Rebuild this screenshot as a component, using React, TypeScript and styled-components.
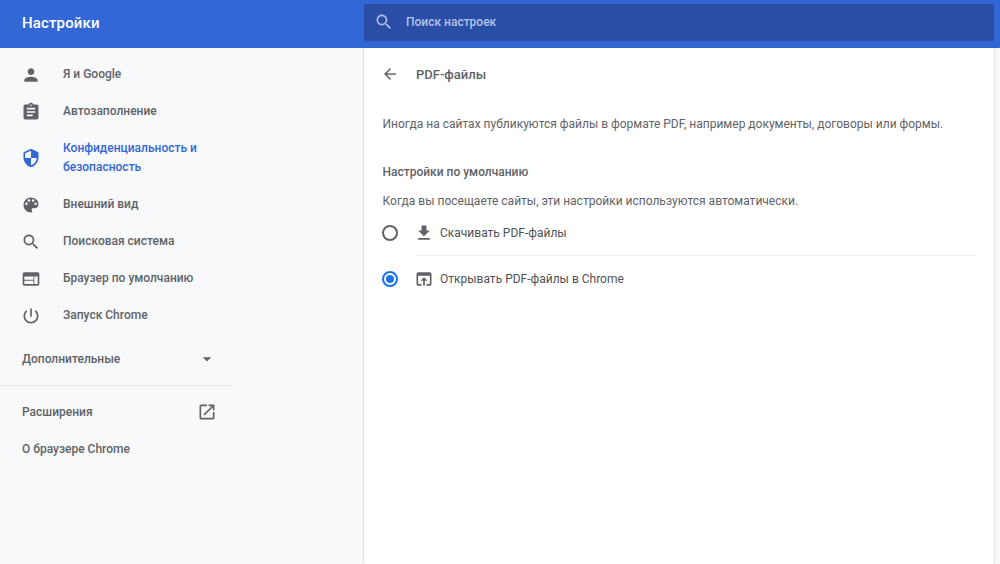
import styled, { createGlobalStyle } from "styled-components";

const GlobalStyle = createGlobalStyle`
  html, body {
    margin: 0;
    height: 100%;
    overflow: hidden;
    background: #f8f9fa;
    font-family: Roboto, "Liberation Sans", sans-serif;
  }
  #root {
    height: 100%;
  }
`;

const icons = {
  person:
    "M12 12c2.21 0 4-1.79 4-4s-1.79-4-4-4-4 1.79-4 4 1.79 4 4 4zm0 2c-2.67 0-8 1.34-8 4v2h16v-2c0-2.66-5.33-4-8-4z",
  assignment:
    "M19 3h-4.18C14.4 1.84 13.3 1 12 1c-1.3 0-2.4.84-2.82 2H5c-1.1 0-2 .9-2 2v14c0 1.1.9 2 2 2h14c1.1 0 2-.9 2-2V5c0-1.1-.9-2-2-2zm-7 0c.55 0 1 .45 1 1s-.45 1-1 1-1-.45-1-1 .45-1 1-1zm2 14H7v-2h7v2zm3-4H7v-2h10v2zm0-4H7V7h10v2z",
  shield:
    "M12 1L3 5v6c0 5.55 3.84 10.74 9 12 5.16-1.26 9-6.45 9-12V5l-9-4zm0 10.99h7c-.53 4.12-3.28 7.79-7 8.94V12H5V6.3l7-3.11v8.8z",
  palette:
    "M12 3c-4.97 0-9 4.03-9 9s4.03 9 9 9c.83 0 1.5-.67 1.5-1.5 0-.39-.15-.74-.39-1.01-.23-.26-.38-.61-.38-.99 0-.83.67-1.5 1.5-1.5H16c2.76 0 5-2.24 5-5 0-4.42-4.03-8-9-8zm-5.5 9c-.83 0-1.5-.67-1.5-1.5S5.67 9 6.5 9 8 9.67 8 10.5 7.33 12 6.5 12zm3-4C8.67 8 8 7.33 8 6.5S8.67 5 9.5 5s1.5.67 1.5 1.5S10.33 8 9.5 8zm5 0c-.83 0-1.5-.67-1.5-1.5S13.67 5 14.5 5s1.5.67 1.5 1.5S15.33 8 14.5 8zm3 4c-.83 0-1.5-.67-1.5-1.5S16.67 9 17.5 9s1.5.67 1.5 1.5-.67 1.5-1.5 1.5z",
  search:
    "M15.5 14h-.79l-.28-.27C15.41 12.59 16 11.11 16 9.5 16 5.91 13.09 3 9.5 3S3 5.91 3 9.5 5.91 16 9.5 16c1.61 0 3.09-.59 4.23-1.57l.27.28v.79l5 4.99L20.49 19l-4.99-5zm-6 0C7.01 14 5 11.99 5 9.5S7.01 5 9.5 5 14 7.01 14 9.5 11.99 14 9.5 14z",
  browser:
    "M20 4H4c-1.1 0-2 .9-2 2v12c0 1.1.9 2 2 2h16c1.1 0 2-.9 2-2V6c0-1.1-.9-2-2-2zm-5 14H4v-4h11v4zm0-5H4V9h11v4zm5 5h-4V9h4v9z",
  power:
    "M13 3h-2v10h2V3zm4.83 2.17l-1.42 1.42C17.99 7.86 19 9.81 19 12c0 3.87-3.13 7-7 7s-7-3.13-7-7c0-2.19 1.01-4.14 2.58-5.42L6.17 5.17C4.23 6.82 3 9.26 3 12c0 4.97 4.03 9 9 9s9-4.03 9-9c0-2.74-1.23-5.18-3.17-6.83z",
  dropdown: "M7 10l5 5 5-5z",
  launch:
    "M19 19H5V5h7V3H5c-1.11 0-2 .9-2 2v14c0 1.1.89 2 2 2h14c1.1 0 2-.9 2-2v-7h-2v7zM14 3v2h3.59l-9.83 9.83 1.41 1.41L19 6.41V10h2V3h-7z",
  back: "M20 11H7.83l5.59-5.59L12 4l-8 8 8 8 1.41-1.41L7.83 13H20v-2z",
  download: "M19 9h-4V3H9v6H5l7 7 7-7zM5 18v2h14v-2H5z",
  open:
    "M19 4H5c-1.11 0-2 .9-2 2v12c0 1.1.89 2 2 2h4v-2H5V8h14v10h-4v2h4c1.1 0 2-.9 2-2V6c0-1.1-.89-2-2-2zm-7 6l-4 4h3v6h2v-6h3l-4-4z",
};

type IconName = keyof typeof icons;

const Svg = styled.svg<{ $color?: string; $size?: number }>`
  display: block;
  flex: none;
  width: ${(p) => p.$size ?? 20}px;
  height: ${(p) => p.$size ?? 20}px;
  fill: ${(p) => p.$color ?? "#5f6368"};
`;

function Icon({ name, color, size }: { name: IconName; color?: string; size?: number }) {
  return (
    <Svg viewBox="0 0 24 24" $color={color} $size={size}>
      <path d={icons[name]} />
    </Svg>
  );
}

const navItems: { icon: IconName; label: string; active?: boolean }[] = [
  { icon: "person", label: "Я и Google" },
  { icon: "assignment", label: "Автозаполнение" },
  { icon: "shield", label: "Конфиденциальность и безопасность", active: true },
  { icon: "palette", label: "Внешний вид" },
  { icon: "search", label: "Поисковая система" },
  { icon: "browser", label: "Браузер по умолчанию" },
  { icon: "power", label: "Запуск Chrome" },
];

export default function App() {
  return (
    <Page>
      <GlobalStyle />
      <Header>
        <Title>Настройки</Title>
        <SearchBar>
          <Icon name="search" color="#a9bbe6" size={20} />
          <SearchText>Поиск настроек</SearchText>
        </SearchBar>
      </Header>
      <Body>
        <Sidebar>
          <Nav>
            {navItems.map((item) => (
              <NavItem key={item.label} $active={item.active}>
                <Icon name={item.icon} color={item.active ? "#3367d6" : "#5f6368"} size={20} />
                <NavLabel>{item.label}</NavLabel>
              </NavItem>
            ))}
          </Nav>
          <AdvancedRow>
            <span>Дополнительные</span>
            <Icon name="dropdown" size={20} />
          </AdvancedRow>
          <Divider />
          <ExtensionRow>
            <span>Расширения</span>
            <Icon name="launch" size={20} />
          </ExtensionRow>
          <AboutRow>О браузере Chrome</AboutRow>
        </Sidebar>
        <Main>
          <SubHeader>
            <Icon name="back" size={18} />
            <PageTitle>PDF-файлы</PageTitle>
          </SubHeader>
          <Intro>
            Иногда на сайтах публикуются файлы в формате PDF, например документы, договоры или формы.
          </Intro>
          <SectionTitle>Настройки по умолчанию</SectionTitle>
          <Secondary>Когда вы посещаете сайты, эти настройки используются автоматически.</Secondary>
          <Options>
            <OptionRow>
              <Radio />
              <OptionBody $divider>
                <Icon name="download" size={20} />
                <span>Скачивать PDF-файлы</span>
              </OptionBody>
            </OptionRow>
            <OptionRow>
              <Radio $checked />
              <OptionBody>
                <Icon name="open" size={20} />
                <span>Открывать PDF-файлы в Chrome</span>
              </OptionBody>
            </OptionRow>
          </Options>
        </Main>
      </Body>
    </Page>
  );
}

const Page = styled.div`
  display: flex;
  flex-direction: column;
  height: 100%;
`;

const Header = styled.header`
  display: flex;
  align-items: center;
  flex: none;
  height: 48px;
  background: #3367d6;
  box-sizing: border-box;
  padding: 4px 6px 7px 0;
`;

const Title = styled.h1`
  flex: none;
  width: 364px;
  box-sizing: border-box;
  margin: 0;
  padding: 1px 0 0 22px;
  color: #fff;
  font-size: 15px;
  font-weight: 500;
  letter-spacing: 0.15px;
`;

const SearchBar = styled.div`
  display: flex;
  align-items: center;
  flex: 1;
  height: 37px;
  box-sizing: border-box;
  padding: 0 0 2px 10px;
  gap: 12px;
  background: #2a4ea5;
  border-radius: 1px;
`;

const SearchText = styled.span`
  color: #b3c3ea;
  font-size: 12px;
  font-weight: 500;
`;

const Body = styled.div`
  display: flex;
  flex: 1;
  min-height: 0;
`;

const Sidebar = styled.aside`
  flex: none;
  width: 364px;
  color: #5f6368;
  font-size: 12px;
  font-weight: 500;
`;

const Nav = styled.nav`
  display: flex;
  flex-direction: column;
  width: 232px;
  padding-top: 8px;
`;

const NavItem = styled.div<{ $active?: boolean }>`
  display: flex;
  align-items: center;
  gap: 22px;
  padding: 0 21px;
  height: ${(p) => (p.$active ? 56 : 37)}px;
  color: ${(p) => (p.$active ? "#3367d6" : "#5f6368")};
`;

const NavLabel = styled.span`
  line-height: 19px;
`;

const AdvancedRow = styled.div`
  display: flex;
  align-items: center;
  justify-content: space-between;
  box-sizing: border-box;
  width: 232px;
  height: 37px;
  margin-top: 6px;
  padding: 0 15px 0 22px;
`;

const Divider = styled.div`
  width: 232px;
  height: 1px;
  margin-top: 8px;
  background: #e4e6e8;
`;

const ExtensionRow = styled.div`
  display: flex;
  align-items: center;
  justify-content: space-between;
  box-sizing: border-box;
  width: 232px;
  height: 37px;
  margin-top: 7px;
  padding: 0 15px 0 22px;
`;

const AboutRow = styled.div`
  display: flex;
  align-items: center;
  width: 232px;
  height: 37px;
  padding-left: 22px;
  box-sizing: border-box;
`;

const Main = styled.main`
  flex: 1;
  margin-right: 6px;
  background: #fff;
  box-shadow: 0 0 2px rgba(60, 64, 67, 0.35);
  color: #5f6368;
  font-size: 12px;
`;

const SubHeader = styled.div`
  display: flex;
  align-items: center;
  gap: 17px;
  height: 52px;
  padding-left: 17px;
`;

const PageTitle = styled.span`
  font-weight: 500;
  font-size: 13px;
`;

const Intro = styled.p`
  margin: 15px 0 0;
  padding-left: 18.5px;
  line-height: 18px;
`;

const SectionTitle = styled.h2`
  margin: 30px 0 0;
  padding-left: 18.5px;
  font-size: 12px;
  font-weight: 500;
  line-height: 18px;
`;

const Secondary = styled.p`
  margin: 11px 0 0;
  padding-left: 18.5px;
  line-height: 18px;
`;

const Options = styled.div`
  display: flex;
  flex-direction: column;
  padding: 0 18px;
`;

const OptionRow = styled.div`
  display: flex;
  align-items: stretch;
  gap: 18px;
  height: 46px;
`;

const Radio = styled.span<{ $checked?: boolean }>`
  position: relative;
  align-self: center;
  flex: none;
  box-sizing: border-box;
  width: 16px;
  height: 16px;
  border: 2px solid ${(p) => (p.$checked ? "#1a73e8" : "#5f6368")};
  border-radius: 50%;

  &::after {
    content: "";
    display: ${(p) => (p.$checked ? "block" : "none")};
    position: absolute;
    inset: 2px;
    border-radius: 50%;
    background: #1a73e8;
  }
`;

const OptionBody = styled.div<{ $divider?: boolean }>`
  display: flex;
  align-items: center;
  flex: 1;
  gap: 6px;
  border-bottom: ${(p) => (p.$divider ? "1px solid #eceef0" : "none")};
  font-weight: 400;
  color: #4f5357;

  svg {
    margin-left: -2px;
  }
`;
